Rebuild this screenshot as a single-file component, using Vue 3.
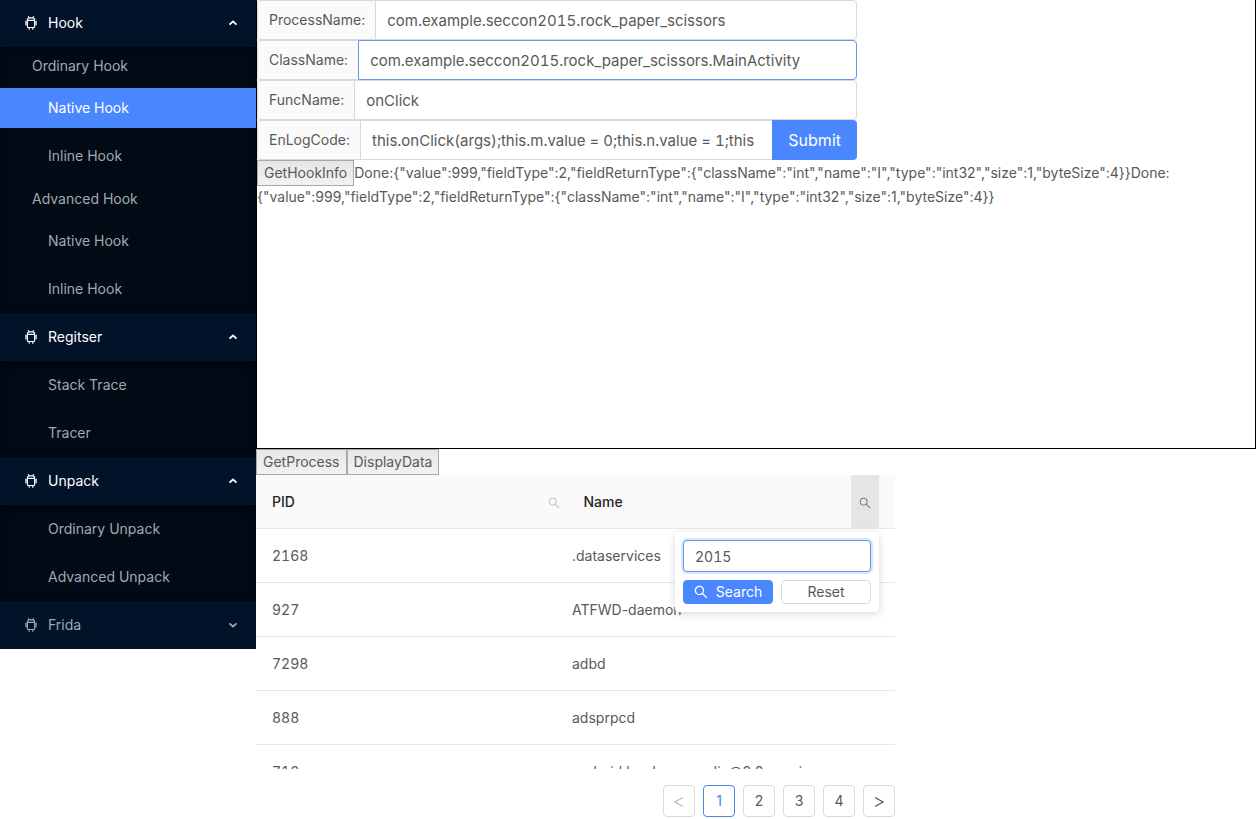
<script setup>
import { ref } from 'vue'

const menu = [
  {
    title: 'Hook',
    open: true,
    groups: [
      { title: 'Ordinary Hook', items: [{ label: 'Native Hook', active: true }, { label: 'Inline Hook' }] },
      { title: 'Advanced Hook', items: [{ label: 'Native Hook' }, { label: 'Inline Hook' }] },
    ],
  },
  { title: 'Regitser', open: true, groups: [{ items: [{ label: 'Stack Trace' }, { label: 'Tracer' }] }] },
  { title: 'Unpack', open: true, groups: [{ items: [{ label: 'Ordinary Unpack' }, { label: 'Advanced Unpack' }] }] },
  { title: 'Frida', open: false, groups: [] },
]

const fields = ref([
  { id: 'process', label: 'ProcessName:', value: 'com.example.seccon2015.rock_paper_scissors' },
  { id: 'class', label: 'ClassName:', value: 'com.example.seccon2015.rock_paper_scissors.MainActivity', focused: true },
  { id: 'func', label: 'FuncName:', value: 'onClick' },
  { id: 'code', label: 'EnLogCode:', value: 'this.onClick(args);this.m.value = 0;this.n.value = 1;this', submit: true },
])

const info = '{"value":999,"fieldType":2,"fieldReturnType":{"className":"int","name":"I","type":"int32","size":1,"byteSize":4}}'

const rows = [
  { pid: 2168, name: '.dataservices' },
  { pid: 927, name: 'ATFWD-daemon' },
  { pid: 7298, name: 'adbd' },
  { pid: 888, name: 'adsprpcd' },
  { pid: 718, name: 'android.hardware.audio@2.0-service' },
]

const query = ref('2015')
const searchPath =
  'M909.6 854.5L649.9 594.8C690.2 542.7 712 479 712 412c0-80.2-31.3-155.400-87.900-212.100-56.600-56.700-132-87.900-212.100-87.900s-155.500 31.300-212.100 87.900C143.200 256.500 112 331.800 112 412c0 80.100 31.300 155.500 87.900 212.100C256.500 680.800 331.800 712 412 712c67 0 130.600-21.800 182.700-62l259.700 259.600a8.200 8.200 0 0 0 11.600 0l43.600-43.500a8.200 8.200 0 0 0 0-11.600zM570.400 570.400C528 612.700 471.800 636 412 636s-116-23.300-158.400-65.600C211.300 528 188 471.800 188 412s23.300-116.100 65.600-158.400C296 211.300 352.200 188 412 188s116.100 23.200 158.400 65.600S636 352.200 636 412s-23.300 116.100-65.600 158.400z'
</script>

<template>
  <div class="page">
    <nav class="sider">
      <section v-for="sub in menu" :key="sub.title">
        <button type="button" class="sub-title" :class="{ open: sub.open }" :aria-expanded="sub.open">
          <svg class="droid" viewBox="0 0 14 14" aria-hidden="true">
            <path d="M4.200.3l.8 1.500M9.800.3L9 1.800M3.400 4.200V3.800c0-1.200.9-2 2.100-2h3c1.200 0 2.100.8 2.100 2v.4M3.400 4.400h7.200v6.200a.9.9 0 0 1-.9.9H4.300a.9.9 0 0 1-.9-.9zM1.900 4.700v4.600M12.100 4.700v4.600M5.200 11.500v2.200M8.800 11.500v2.200" />
          </svg>
          <span>{{ sub.title }}</span>
          <svg class="arrow" viewBox="0 0 10 10" aria-hidden="true">
            <path :d="sub.open ? 'M1.500 6.700L5 3.400l3.500 3.300' : 'M1.500 3.300L5 6.600l3.500-3.300'" />
          </svg>
        </button>
        <div v-if="sub.open" class="sub-body">
          <template v-for="(group, g) in sub.groups" :key="g">
            <div v-if="group.title" class="group-title">{{ group.title }}</div>
            <ul>
              <li v-for="item in group.items" :key="item.label">
                <a href="#" :class="{ active: item.active }">{{ item.label }}</a>
              </li>
            </ul>
          </template>
        </div>
      </section>
    </nav>

    <main>
      <section class="hook-panel">
        <form class="fields" @submit.prevent>
          <div v-for="f in fields" :key="f.id" class="field">
            <label :for="f.id">{{ f.label }}</label>
            <input :id="f.id" v-model="f.value" type="text" :class="{ focused: f.focused, joined: f.submit }" />
            <button v-if="f.submit" type="submit">Submit</button>
          </div>
        </form>
        <div class="output"><button type="button" class="plain">GetHookInfo</button>Done:{{ info }}Done:<wbr />{{ info }}</div>
      </section>

      <section class="process">
        <div class="actions">
          <button type="button" class="plain">GetProcess</button>
          <button type="button" class="plain">DisplayData</button>
        </div>

        <div class="head-wrap">
          <table>
            <thead>
              <tr>
                <th>
                  <div class="th-inner">
                    <span>PID</span>
                    <button type="button" class="filter" aria-label="Filter PID">
                      <svg viewBox="64 64 896 896"><path :d="searchPath" /></svg>
                    </button>
                  </div>
                </th>
                <th>
                  <div class="th-inner">
                    <span>Name</span>
                    <button type="button" class="filter opened" aria-label="Filter Name">
                      <svg viewBox="64 64 896 896"><path :d="searchPath" /></svg>
                    </button>
                  </div>
                </th>
              </tr>
            </thead>
          </table>
          <div class="popup">
            <input v-model="query" type="text" aria-label="Search Name" />
            <div class="popup-actions">
              <button type="button" class="primary">
                <svg viewBox="64 64 896 896" aria-hidden="true"><path :d="searchPath" /></svg>
                <span>Search</span>
              </button>
              <button type="button">Reset</button>
            </div>
          </div>
        </div>

        <div class="body-wrap">
          <table>
            <colgroup>
              <col class="pid-col" />
              <col />
            </colgroup>
            <tbody>
              <tr v-for="r in rows" :key="r.pid">
                <td class="pid">{{ r.pid }}</td>
                <td>{{ r.name }}</td>
              </tr>
            </tbody>
          </table>
        </div>

        <div class="pager">
          <button type="button" disabled aria-label="Previous page">
            <svg viewBox="0 0 10 12"><path d="M9 1.500L1 6l8 4.500" /></svg>
          </button>
          <button v-for="n in 4" :key="n" type="button" :class="{ current: n === 1 }">{{ n }}</button>
          <button type="button" aria-label="Next page">
            <svg viewBox="0 0 10 12"><path d="M1 1.500L9 6l-8 4.500" /></svg>
          </button>
        </div>
      </section>
    </main>
  </div>
</template>

<style>
body {
  background: #fff;
  overflow: hidden;
}
</style>

<style scoped>
.page {
  display: flex;
  align-items: flex-start;
  font-family: Inter, "Liberation Sans", sans-serif;
  font-size: 14px;
  font-variant-ligatures: no-contextual;
  line-height: 21px;
  color: #595959;
}
.page *,
.page {
  box-sizing: border-box;
}
button,
input {
  font: inherit;
  color: inherit;
  margin: 0;
}
button {
  cursor: pointer;
}
svg {
  display: block;
}

.sider {
  flex: none;
  width: 256px;
  background: #021229;
  color: #a3a8b0;
}
.sub-title {
  display: flex;
  align-items: center;
  width: 100%;
  height: 48px;
  padding: 0 18px 0 24px;
  border: 0;
  background: none;
  line-height: 40px;
  text-align: left;
}
section:first-child > .sub-title {
  height: 47px;
  padding-bottom: 1px;
}
.sub-title.open {
  color: #fff;
}
.sub-title span {
  flex: 1;
}
.droid {
  width: 14px;
  height: 14px;
  margin-right: 10px;
  fill: none;
  stroke: currentColor;
  stroke-width: 1.2;
}
.arrow {
  width: 10px;
  height: 10px;
  fill: none;
  stroke: currentColor;
  stroke-width: 1.8;
}
.sub-body {
  background: #010a15;
  box-shadow: inset 0 2px 8px rgba(0, 0, 0, 0.45);
}
.group-title {
  padding: 8px 32px;
}
ul {
  display: flex;
  flex-direction: column;
  gap: 8px;
  margin: 0;
  padding: 4px 0;
  list-style: none;
}
li a {
  display: block;
  padding: 0 16px 0 48px;
  line-height: 40px;
  color: inherit;
  text-decoration: none;
}
li a.active {
  background: #4a87ff;
  color: #fff;
}

main {
  flex: 1;
  min-width: 0;
  padding-right: 1px;
}
.hook-panel {
  min-height: 449px;
  border: 1px solid #000;
  border-top: 0;
}
.fields {
  width: 600px;
  max-width: 100%;
}
.field {
  display: flex;
  height: 40px;
}
.field label {
  padding: 0 10px 0 11px;
  border: 1px solid #d9d9d9;
  border-right: 0;
  border-radius: 4px 0 0 4px;
  background: #fafafa;
  line-height: 38px;
}
.field input {
  flex: 1;
  min-width: 0;
  padding: 0 11px;
  border: 1px solid #d9d9d9;
  border-radius: 0 4px 4px 0;
  background: #fff;
  font-size: 15px;
  font-variant-numeric: tabular-nums;
  outline: 0;
}
.field input.focused {
  border-color: #6299e6;
}
.field input.joined {
  padding-right: 10px;
  border-right: 0;
  border-radius: 0;
}
.field button {
  padding: 0 16px;
  border: 0;
  border-radius: 0 4px 4px 0;
  background: #4a87ff;
  color: #fff;
  font-size: 16px;
}
.output {
  overflow-wrap: break-word;
}
.plain {
  height: 26px;
  padding: 0 6px 1px;
  border: 1px solid #a9a9a9;
  border-radius: 0;
  background: linear-gradient(#e6e6e6, #f2f2f2);
}

.process {
  width: 639px;
  max-width: 100%;
}
.actions {
  display: flex;
}
.head-wrap {
  position: relative;
  padding-right: 16px;
  border-bottom: 1px solid #e8e8e8;
  background: #fafafa;
}
table {
  width: 100%;
  border-collapse: separate;
  border-spacing: 0;
  table-layout: fixed;
}
th {
  padding: 0;
  font-weight: 500;
  color: #262626;
}
.th-inner {
  display: flex;
  align-items: center;
  justify-content: space-between;
  height: 53px;
  padding-left: 16px;
}
.filter {
  display: flex;
  align-items: center;
  justify-content: center;
  align-self: stretch;
  width: 28px;
  padding: 3px 0 0;
  border: 0;
  background: none;
  color: #bfbfbf;
}
.filter.opened {
  background: #e5e5e5;
  color: #7a7a7a;
}
.filter svg {
  width: 12px;
  height: 12px;
  fill: currentColor;
}
.popup {
  position: absolute;
  z-index: 1;
  top: calc(100% + 4px);
  right: 16px;
  width: 204px;
  padding: 8px;
  border-radius: 4px;
  background: #fff;
  box-shadow: 0 2px 8px rgba(0, 0, 0, 0.15);
}
.popup input {
  display: block;
  width: 100%;
  height: 32px;
  padding: 1px 11px 0;
  border: 1px solid #6299e6;
  border-radius: 4px;
  outline: 0;
  font-variant-numeric: tabular-nums;
  box-shadow: 0 0 0 2px rgba(74, 135, 255, 0.2);
}
.popup-actions {
  display: flex;
  gap: 8px;
  margin-top: 8px;
}
.popup-actions button {
  display: flex;
  flex: 1;
  align-items: center;
  justify-content: center;
  gap: 8px;
  height: 24px;
  padding: 0 0 1px;
  border: 1px solid #d9d9d9;
  border-radius: 4px;
  background: #fff;
}
.popup-actions .primary {
  border-color: #4a87ff;
  background: #4a87ff;
  color: #fff;
}
.popup-actions svg {
  width: 14px;
  height: 14px;
  fill: currentColor;
}
.body-wrap {
  height: 240px;
  overflow: hidden;
}
.pid-col {
  width: 300px;
}
td {
  height: 54px;
  padding: 0 16px;
  border-bottom: 1px solid #e8e8e8;
}
.pid {
  font-variant-numeric: tabular-nums;
}
.pager {
  display: flex;
  justify-content: flex-end;
  gap: 8px;
  margin-top: 16px;
}
.pager button {
  display: flex;
  align-items: center;
  justify-content: center;
  width: 32px;
  height: 32px;
  padding: 0 0 1px;
  border: 1px solid #d9d9d9;
  border-radius: 4px;
  background: #fff;
}
.pager .current {
  border-color: #4a84e6;
  color: #4a84e6;
}
.pager button:disabled {
  color: #bfbfbf;
}
.pager svg {
  width: 10px;
  height: 12px;
  margin-top: 3px;
  fill: none;
  stroke: currentColor;
  stroke-width: 1.2;
}
</style>
